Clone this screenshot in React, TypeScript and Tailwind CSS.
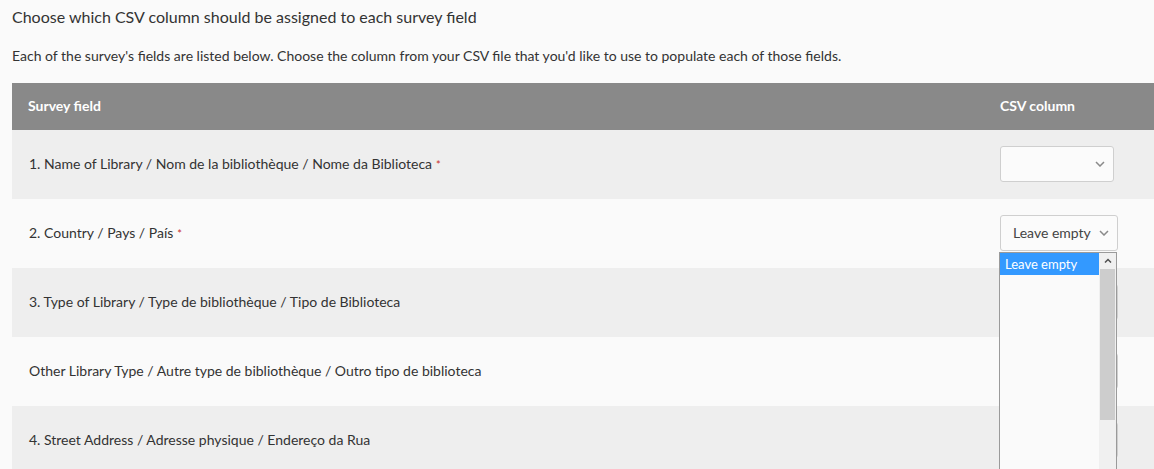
import React from "react";

const rows: { label: string; required?: boolean; value?: string }[] = [
  { label: "1. Name of Library / Nom de la bibliothèque / Nome da Biblioteca", required: true, value: "" },
  { label: "2. Country / Pays / País", required: true, value: "Leave empty" },
  { label: "3. Type of Library / Type de bibliothèque / Tipo de Biblioteca", value: "" },
  { label: "Other Library Type / Autre type de bibliothèque / Outro tipo de biblioteca", value: "" },
  { label: "4. Street Address / Adresse physique / Endereço da Rua", value: "" },
];

function Chevron() {
  return (
    <svg width="10" height="6" viewBox="0 0 10 6" className="shrink-0">
      <polyline points="1,1 5,5 9,1" fill="none" stroke="#8a8a8a" strokeWidth="1.5" />
    </svg>
  );
}

function SelectBox({ value, wide }: { value: string; wide?: boolean }) {
  return (
    <div
      className={`flex h-[36px] items-center justify-between rounded-[3px] border border-[#cfcfcf] bg-[#fbfbfb] pl-[12px] pr-[8px] ${wide ? "w-[118px]" : "w-[114px]"}`}
    >
      <span className="text-[14px] text-[#444]">{value}</span>
      <Chevron />
    </div>
  );
}

export default function App() {
  return (
    <div
      className="h-[469px] w-[1154px] overflow-hidden bg-[#fafafa] text-[#333]"
      style={{ fontFamily: "Lato, 'Open Sans', sans-serif" }}
    >
      <div className="pl-[12px] pt-[6px]">
        <h2 className="text-[16px] leading-[22px] text-[#333]">
          Choose which CSV column should be assigned to each survey field
        </h2>
        <p className="mt-[18px] text-[14px] leading-[20px] text-[#333]">
          Each of the survey's fields are listed below. Choose the column from your CSV file that you'd like to use to populate each of those fields.
        </p>
        <div className="mt-[17px] w-[1200px]">
          <div className="flex h-[47px] items-center bg-[#898989] pb-[2px] text-[14px] font-bold text-white">
            <div className="w-[988px] pl-[16px]">Survey field</div>
            <div>CSV column</div>
          </div>
          {rows.map((r, i) => (
            <div
              key={i}
              className={`flex h-[69px] items-center pb-[2px] ${i % 2 === 0 ? "bg-[#eeeeee]" : "bg-[#fafafa]"}`}
            >
              <div className="w-[988px] pl-[17px] text-[14px] text-[#333]">
                {r.label}
                {r.required && <span className="ml-[4px] text-[11px] text-[#c9302c]">*</span>}
              </div>
              <div className="relative">
                <SelectBox value={r.value ?? ""} wide={i !== 0} />
                {i === 1 && (
                  <div className="absolute left-[-1px] top-[37px] z-10 flex h-[240px] w-[118px] border border-[#9a9a9a] bg-[#fafafa]">
                    <div className="flex-1">
                      <div className="h-[22px] bg-[#3399ff] pl-[5px] text-[13px] leading-[22px] text-white">
                        Leave empty
                      </div>
                    </div>
                    <div className="flex w-[17px] flex-col bg-[#f0f0f0]">
                      <div className="flex h-[16px] items-center justify-center">
                        <svg width="8" height="5" viewBox="0 0 8 5">
                          <polyline points="1,4.5 4,1.5 7,4.5" fill="none" stroke="#505050" strokeWidth="1.5" />
                        </svg>
                      </div>
                      <div className="mx-[1px] h-[151px] bg-[#cdcdcd]" />
                    </div>
                  </div>
                )}
              </div>
            </div>
          ))}
        </div>
      </div>
    </div>
  );
}
